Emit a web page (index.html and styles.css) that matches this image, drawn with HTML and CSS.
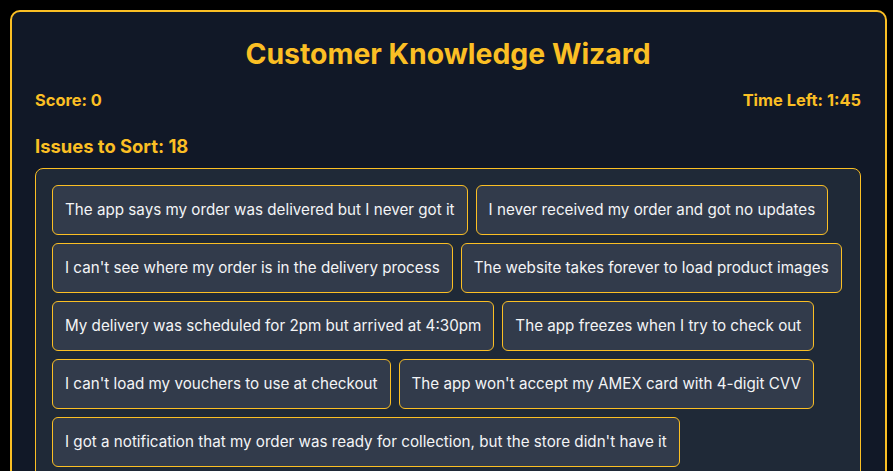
FILE: index.html
```html
<!DOCTYPE html>
<html>
<head>
<meta charset="utf-8">
<link rel="stylesheet" href="styles.css">
</head>
<body>
<div class="card">
  <h1 class="title">Customer Knowledge Wizard</h1>
  <div class="stats">
    <span>Score: 0</span>
    <span>Time Left: 1:45</span>
  </div>
  <h2 class="subtitle">Issues to Sort: 18</h2>
  <div class="pool">
    <div class="item">The app says my order was delivered but I never got it</div>
    <div class="item">I never received my order and got no updates</div>
    <div class="item">I can't see where my order is in the delivery process</div>
    <div class="item">The website takes forever to load product images</div>
    <div class="item">My delivery was scheduled for 2pm but arrived at 4:30pm</div>
    <div class="item">The app freezes when I try to check out</div>
    <div class="item">I can't load my vouchers to use at checkout</div>
    <div class="item">The app won't accept my AMEX card with 4-digit CVV</div>
    <div class="item">I got a notification that my order was ready for collection, but the store didn't have it</div>
  </div>
</div>
</body>
</html>
```

FILE: styles.css
```css
html, body {
  margin: 0;
  padding: 0;
  background: #000;
}
body {
  font-family: Inter, "Noto Sans", sans-serif;
  padding: 10px 6px 0 10px;
}
.card {
  background: #111827;
  border: 2px solid #fbbf24;
  border-radius: 10px;
  padding: 24px 24px 24px 23px;
  min-height: 600px;
}
.title {
  margin: 0;
  text-align: center;
  color: #fbbf24;
  font-size: 28.4px;
  font-weight: 700;
  line-height: 36px;
}
.stats {
  display: flex;
  justify-content: space-between;
  color: #fbbf24;
  font-size: 16.4px;
  font-weight: 700;
  line-height: 24px;
  margin-top: 16px;
}
.subtitle {
  margin: 20px 0 0;
  color: #fbbf24;
  font-size: 18.4px;
  font-weight: 700;
  line-height: 28px;
}
.pool {
  margin-top: 8px;
  background: #1f2937;
  border: 1px solid #fbbf24;
  border-radius: 8px;
  padding: 16px 14px 16px 16px;
  display: flex;
  flex-wrap: wrap;
  gap: 8px;
  min-height: 400px;
  align-content: flex-start;
}
.item {
  background: #323b4b;
  border: 1px solid #fbbf24;
  border-radius: 6px;
  padding: 12px 12px;
  color: #f3f4f6;
  font-size: 15.2px;
  line-height: 24px;
}
```
